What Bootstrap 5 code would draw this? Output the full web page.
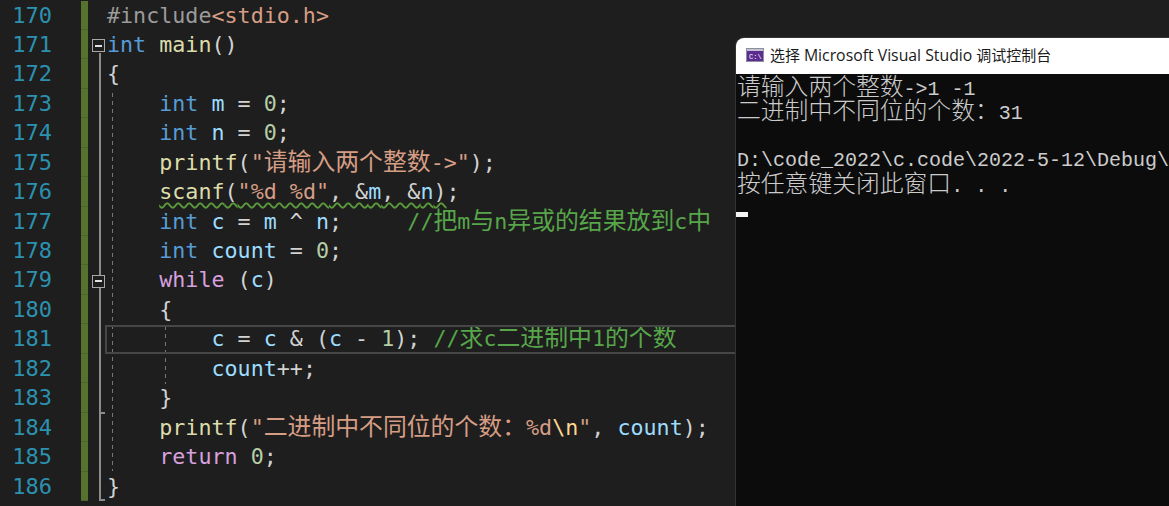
<!DOCTYPE html>
<html lang="zh">
<head>
<meta charset="utf-8">
<title>Editor</title>
<link href="https://cdn.jsdelivr.net/npm/bootstrap@5.3.0/dist/css/bootstrap.min.css" rel="stylesheet">
<style>
html,body{height:506px;overflow:hidden;background:#1e1e1e}
.ed-wrap{height:506px;overflow:hidden;padding-top:.5px;font:21.7px/29.44px "DejaVu Sans Mono","Noto Sans CJK SC",monospace;color:#d2d2d2;background:#1e1e1e}
.ed-nums{width:52px;text-align:right;color:#2b91af;font-size:22px}
.ed-nums div,.ed-code div{height:29.44px;white-space:pre}
.ed-bar{width:7px;margin-left:29px;height:500.5px}
.ed-bar div{height:29.44px;background:#56722e;border-bottom:1px solid #4b6428}
.ed-fold{width:19px;height:500.5px}
.fold-line{left:11px;top:52px;height:448px;border-left:2px solid #8c8c8c}
.fold-tick{left:11px;width:6px;border-bottom:2px solid #8c8c8c}
.tick-a{top:411px}.tick-b{top:498px}
.fold-box{left:4px;width:13px;height:13px;border:1px solid #a8a8a8;background:#1e1e1e}
.box-a{top:38.5px}.box-b{top:274px}
.fold-box::after{content:"";position:absolute;left:2px;right:2px;top:4.5px;height:2px;background:#e0e0e0}
.ed-code{flex:1;min-width:0}
.ed-guide{width:1px;background:repeating-linear-gradient(#777 0 4px,transparent 4px 8px)}
.g1{left:5px;top:92px;height:378px}
.g2{left:58px;top:325px;height:58px}
.ed-cur{left:-2px;right:0;top:324.5px;height:29px;border:2px solid #464646}
.c-key{color:#569cd6}.c-ctl{color:#d8a0df}.c-fn{color:#dcdcaa}.c-var{color:#9cdcfe}.c-str{color:#d69d85}.c-num{color:#b5cea8}.c-com{color:#57a64a}.c-pre{color:#9b9b9b}.c-esc{color:#ffd68f}
.c-han{font-size:23.85px;line-height:1}
.c-sq{text-decoration:underline wavy #5a9a3c 1.5px;text-underline-offset:3px}
.con-win{left:736px;top:38px;width:440px;height:468px;border-top-left-radius:8px;overflow:hidden;background:#0c0c0c;box-shadow:0 0 0 1px #333}
.con-title{height:36px;flex:none;background:#fff;color:#1a1a1a;font:15px "Open Sans","Noto Sans CJK SC",sans-serif;padding:0 0 3px 10px;gap:6px}
.con-latin{font-size:15.8px}
.con-icon{display:block}
.con-body{color:#cccccc;font:20px/24.3px "Liberation Mono","Noto Sans CJK SC",monospace;padding:2.5px 0 0 1px}
.con-line{height:24.3px;white-space:pre}
.con-han{font-size:23.8px;line-height:1;font-weight:300}
.con-cursor{width:12px;height:5px;background:#f2f2f2;margin:14px 0 0 -1px}
</style>
</head>
<body>
<div class="ed-wrap position-relative d-flex">
  <div class="ed-nums flex-shrink-0">
    <div>170</div><div>171</div><div>172</div><div>173</div><div>174</div><div>175</div><div>176</div><div>177</div><div>178</div><div>179</div><div>180</div><div>181</div><div>182</div><div>183</div><div>184</div><div>185</div><div>186</div>
  </div>
  <div class="ed-bar flex-shrink-0">
    <div></div><div></div><div></div><div></div><div></div><div></div><div></div><div></div><div></div><div></div><div></div><div></div><div></div><div></div><div></div><div></div><div></div>
  </div>
  <div class="ed-fold flex-shrink-0 position-relative">
    <span class="fold-line position-absolute"></span>
    <span class="fold-tick tick-a position-absolute"></span>
    <span class="fold-tick tick-b position-absolute"></span>
    <span class="fold-box box-a position-absolute"></span>
    <span class="fold-box box-b position-absolute"></span>
  </div>
  <div class="ed-code position-relative">
    <span class="ed-guide g1 position-absolute"></span>
    <span class="ed-guide g2 position-absolute"></span>
    <span class="ed-cur position-absolute"></span>
    <div><span class="c-pre">#include</span><span class="c-str">&lt;stdio.h&gt;</span></div>
    <div><span class="c-key">int</span> <span class="c-fn">main</span>()</div>
    <div>{</div>
    <div>    <span class="c-key">int</span> <span class="c-var">m</span> = <span class="c-num">0</span>;</div>
    <div>    <span class="c-key">int</span> <span class="c-var">n</span> = <span class="c-num">0</span>;</div>
    <div>    <span class="c-fn">printf</span>(<span class="c-str">"<span class="c-han">请输入两个整数</span>-&gt;"</span>);</div>
    <div>    <span class="c-sq"><span class="c-fn">scanf</span>(<span class="c-str">"%d %d"</span>, &amp;<span class="c-var">m</span>, &amp;<span class="c-var">n</span>)</span>;</div>
    <div>    <span class="c-key">int</span> <span class="c-var">c</span> = <span class="c-var">m</span> ^ <span class="c-var">n</span>;     <span class="c-com">//<span class="c-han">把</span>m<span class="c-han">与</span>n<span class="c-han">异或的结果放到</span>c<span class="c-han">中</span></span></div>
    <div>    <span class="c-key">int</span> <span class="c-var">count</span> = <span class="c-num">0</span>;</div>
    <div>    <span class="c-ctl">while</span> (<span class="c-var">c</span>)</div>
    <div>    {</div>
    <div>        <span class="c-var">c</span> = <span class="c-var">c</span> &amp; (<span class="c-var">c</span> - <span class="c-num">1</span>); <span class="c-com">//<span class="c-han">求</span>c<span class="c-han">二进制中</span>1<span class="c-han">的个数</span></span></div>
    <div>        <span class="c-var">count</span>++;</div>
    <div>    }</div>
    <div>    <span class="c-fn">printf</span>(<span class="c-str">"<span class="c-han">二进制中不同位的个数：</span>%d</span><span class="c-esc">\n</span><span class="c-str">"</span>, <span class="c-var">count</span>);</div>
    <div>    <span class="c-ctl">return</span> <span class="c-num">0</span>;</div>
    <div>}</div>
  </div>
</div>
<div class="con-win position-absolute d-flex flex-column">
  <div class="con-title d-flex align-items-center">
    <svg class="con-icon" width="18" height="14" viewBox="0 0 18 14"><rect x=".5" y=".5" width="17" height="13" fill="#5c2d91" stroke="#8f8f9f"/><rect x="1" y="1" width="16" height="2" fill="#c4c4d0"/><text x="3" y="11" font-size="7" fill="#fff" font-family="Liberation Mono">C:\</text></svg>
    <span>选择 <span class="con-latin">Microsoft Visual Studio</span> 调试控制台</span>
  </div>
  <div class="con-body">
    <div class="con-line"><span class="con-han">请输入两个整数</span>-&gt;1 -1</div>
    <div class="con-line"><span class="con-han">二进制中不同位的个数：</span>31</div>
    <div class="con-line"></div>
    <div class="con-line">D:\code_2022\c.code\2022-5-12\Debug\</div>
    <div class="con-line"><span class="con-han">按任意键关闭此窗口</span>. . .</div>
    <div class="con-cursor"></div>
  </div>
</div>
<script src="https://cdn.jsdelivr.net/npm/bootstrap@5.3.0/dist/js/bootstrap.bundle.min.js"></script>
</body>
</html>
